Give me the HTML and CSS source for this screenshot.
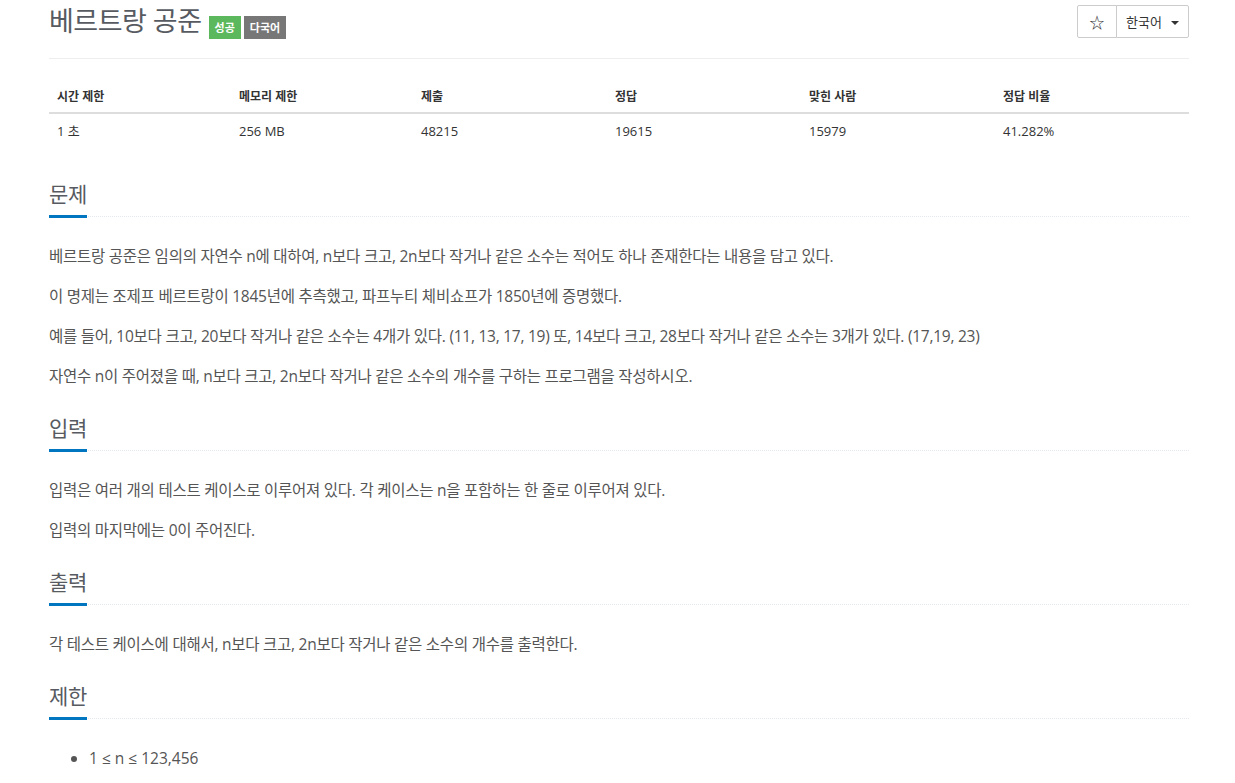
FILE: index.html
```html
<!DOCTYPE html>
<html lang="ko">
<head>
<meta charset="utf-8">
<title>베르트랑 공준</title>
<link rel="stylesheet" href="styles.css">
</head>
<body>
<div class="container">
  <div class="page-header">
    <h1 class="title"><span class="title-text">베르트랑 공준</span><span class="label label-success">성공</span><span class="label label-default">다국어</span></h1>
    <div class="btn-group">
      <button class="btn btn-star">☆</button>
      <button class="btn btn-lang">한국어 <span class="caret"></span></button>
    </div>
  </div>

  <table class="info">
    <colgroup>
      <col class="c1"><col class="c1"><col class="c2"><col class="c2"><col class="c2"><col class="c2">
    </colgroup>
    <thead>
      <tr><th>시간 제한</th><th>메모리 제한</th><th>제출</th><th>정답</th><th>맞힌 사람</th><th>정답 비율</th></tr>
    </thead>
    <tbody>
      <tr><td>1 초</td><td>256 MB</td><td>48215</td><td>19615</td><td>15979</td><td>41.282%</td></tr>
    </tbody>
  </table>

  <section class="section">
    <div class="headline"><h2>문제</h2></div>
    <div class="body">
      <p>베르트랑 공준은 임의의 자연수 n에 대하여, n보다 크고, 2n보다 작거나 같은 소수는 적어도 하나 존재한다는 내용을 담고 있다.</p>
      <p>이 명제는 조제프 베르트랑이 1845년에 추측했고, 파프누티 체비쇼프가 1850년에 증명했다.</p>
      <p>예를 들어, 10보다 크고, 20보다 작거나 같은 소수는 4개가 있다. (11, 13, 17, 19) 또, 14보다 크고, 28보다 작거나 같은 소수는 3개가 있다. (17,19, 23)</p>
      <p>자연수 n이 주어졌을 때, n보다 크고, 2n보다 작거나 같은 소수의 개수를 구하는 프로그램을 작성하시오.</p>
    </div>
  </section>

  <section class="section">
    <div class="headline"><h2>입력</h2></div>
    <div class="body">
      <p>입력은 여러 개의 테스트 케이스로 이루어져 있다. 각 케이스는 n을 포함하는 한 줄로 이루어져 있다.</p>
      <p>입력의 마지막에는 0이 주어진다.</p>
    </div>
  </section>

  <section class="section">
    <div class="headline"><h2>출력</h2></div>
    <div class="body">
      <p>각 테스트 케이스에 대해서, n보다 크고, 2n보다 작거나 같은 소수의 개수를 출력한다.</p>
    </div>
  </section>

  <section class="section">
    <div class="headline"><h2>제한</h2></div>
    <div class="body">
      <ul>
        <li>1 ≤ n ≤ 123,456</li>
      </ul>
    </div>
  </section>
</div>
</body>
</html>
```

FILE: styles.css
```css
html, body {
  margin: 0;
  padding: 0;
  background: #fff;
}

body {
  font-family: "Open Sans", "Noto Sans CJK KR", sans-serif;
  color: #555;
}

.container {
  width: 1140px;
  margin-left: 49px;
}

.page-header {
  display: flex;
  justify-content: space-between;
  align-items: flex-start;
  height: 58px;
  border-bottom: 1px solid #eee;
  margin-bottom: 19px;
}

.title {
  display: flex;
  align-items: flex-start;
  margin: 0;
  font-weight: 400;
}

.title-text {
  font-size: 27px;
  line-height: 42px;
  letter-spacing: -0.5px;
  color: #575b61;
}

.label {
  display: inline-block;
  margin-top: 16px;
  height: 23px;
  line-height: 23px;
  padding: 0 6px;
  font-size: 11px;
  font-weight: 700;
  color: #fff;
}

.label-success {
  background: #5cb85c;
  margin-left: 7px;
}

.label-default {
  background: #777;
  margin-left: 3px;
}

.btn-group {
  display: flex;
  margin-top: 5px;
}

.btn {
  height: 33px;
  border: 1px solid #ccc;
  background: #fff;
  color: #333;
  font-family: "Open Sans", "Noto Sans CJK KR", sans-serif;
  font-size: 13px;
  padding: 0;
  display: flex;
  align-items: center;
  justify-content: center;
}

.btn-star {
  width: 40px;
  font-size: 15px;
  border-radius: 2px 0 0 2px;
}

.btn-lang {
  width: 73px;
  margin-left: -1px;
  border-radius: 0 2px 2px 0;
  gap: 9px;
}

.caret {
  display: inline-block;
  width: 0;
  height: 0;
  border-top: 4px solid #333;
  border-left: 4px solid transparent;
  border-right: 4px solid transparent;
  margin-top: 2px;
}

.info {
  width: 100%;
  table-layout: fixed;
  border-collapse: collapse;
  margin-bottom: 33px;
}

.info .c1 { width: 182px; }
.info .c2 { width: 194px; }

.info th {
  text-align: left;
  font-size: 12px;
  font-weight: 700;
  line-height: 18px;
  padding: 10px 8px 6px;
  color: #333;
  border-bottom: 2px solid #ddd;
}

.info td {
  font-size: 13px;
  line-height: 18px;
  padding: 8px;
  color: #333;
}

.section {
  margin-bottom: 27px;
}

.headline {
  border-bottom: 1px dotted #e4e9f0;
  margin-bottom: 27px;
}

.headline h2 {
  display: inline-block;
  margin: 0 0 -2px 0;
  font-size: 21px;
  font-weight: 400;
  letter-spacing: -0.2px;
  line-height: 26px;
  padding-bottom: 8px;
  border-bottom: 3px solid #0076c0;
  color: #575b61;
}

.body p {
  margin: 0 0 16px 0;
  font-size: 15.5px;
  line-height: 24px;
  letter-spacing: -0.25px;
  color: #555;
}

.body p:last-child {
  margin-bottom: 0;
}

.body ul {
  margin: 0;
  padding-left: 40px;
  font-size: 15.5px;
  line-height: 24px;
}
```
